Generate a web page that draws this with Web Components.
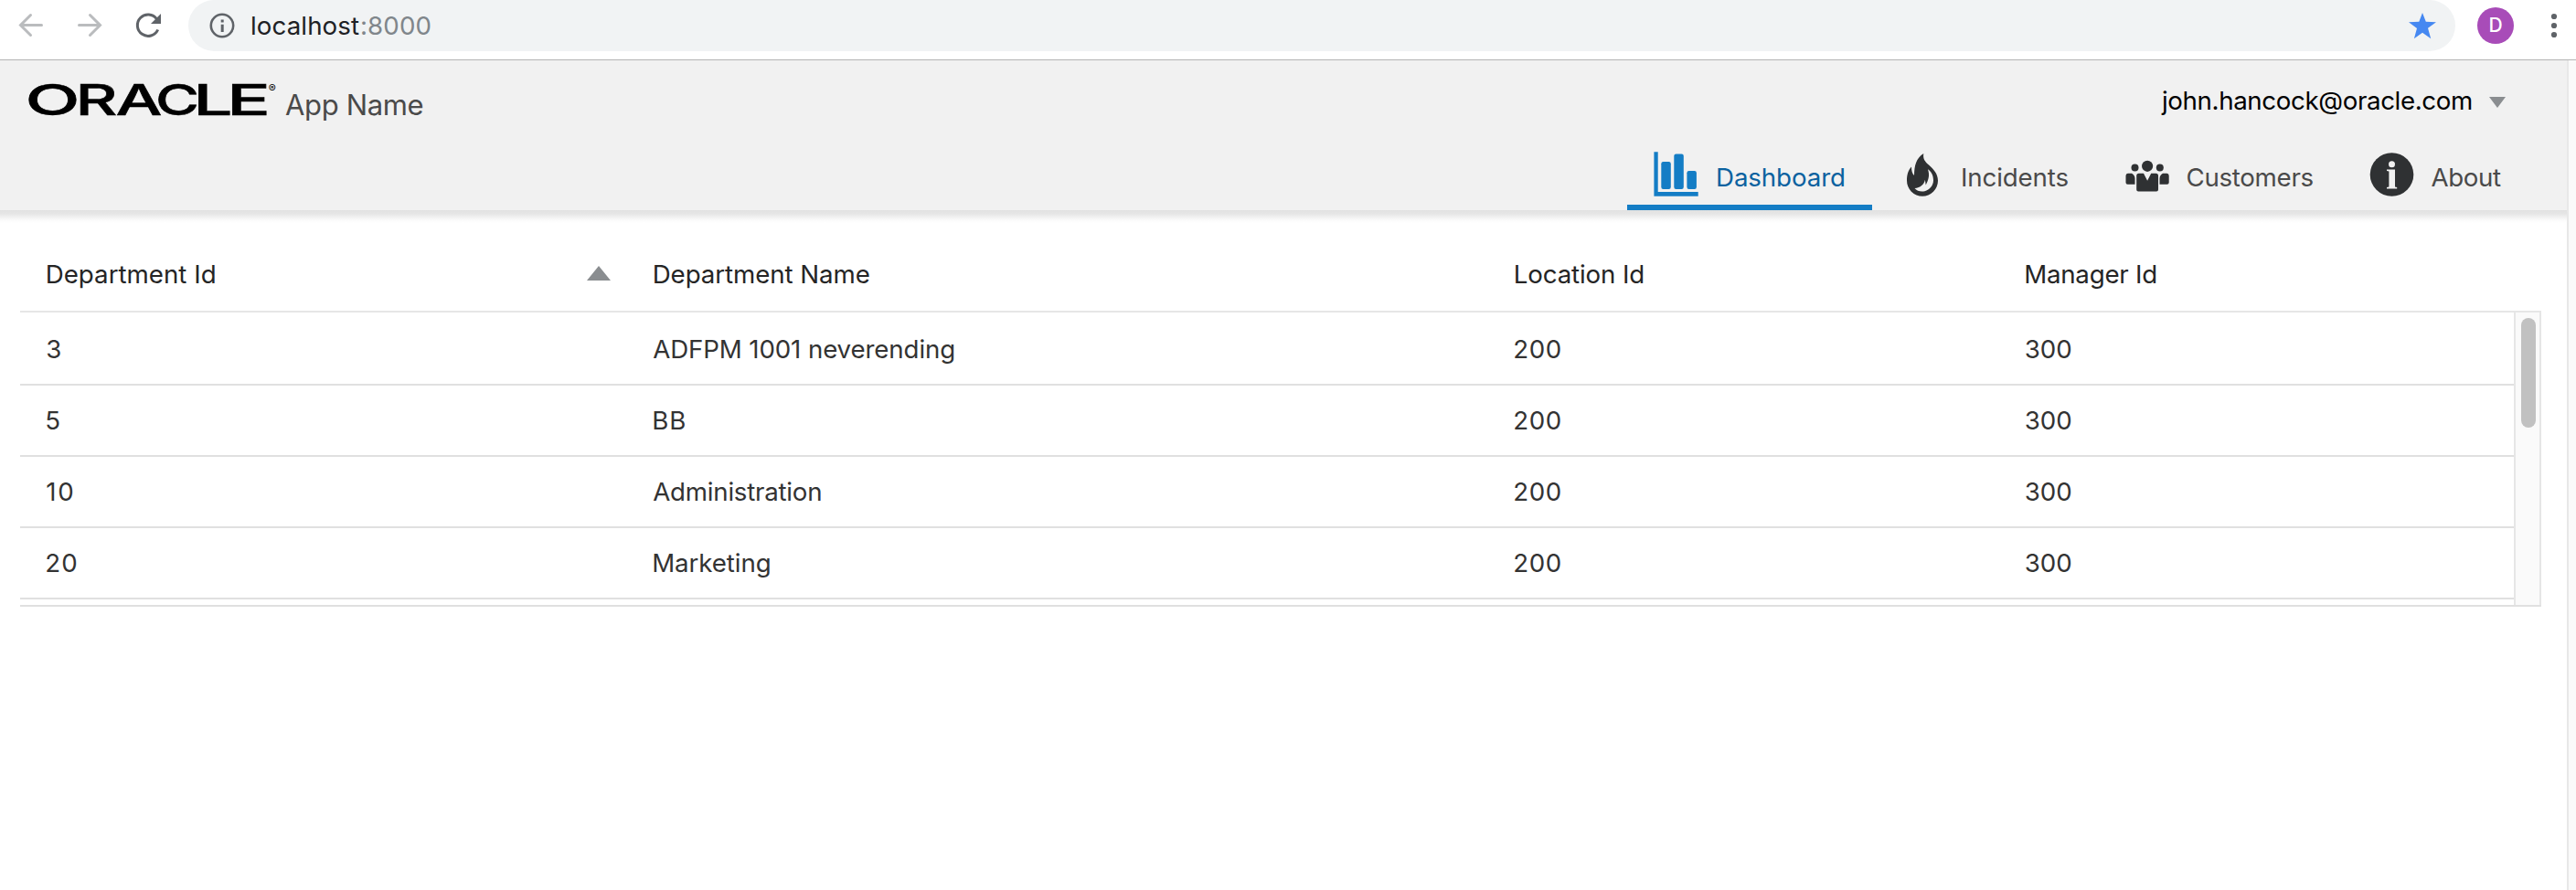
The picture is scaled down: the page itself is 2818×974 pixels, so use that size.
<!DOCTYPE html>
<html lang="en">
<head>
<meta charset="utf-8">
<title>App Name</title>
<style>
html,body{margin:0;height:100%;overflow:hidden}
body{font-family:Inter,"Liberation Sans",sans-serif;font-size:27.7px;background:#fff;color:#333}
</style>
</head>
<body>
<demo-window></demo-window>
<script>
const define = (name, html, setup) => {
  const tpl = document.createElement('template');
  tpl.innerHTML = html;
  customElements.define(name, class extends HTMLElement {
    constructor() {
      super();
      this.attachShadow({ mode: 'open' }).append(tpl.content.cloneNode(true));
    }
    connectedCallback() { if (setup) setup.call(this, this.shadowRoot); }
  });
};

/* A single line of text whose tracking is set so that it spans the given width. */
const ctx = document.createElement('canvas').getContext('2d');
define('text-run', `<style>
  :host{display:block;white-space:nowrap;flex:none}
  span{display:block}
</style><span><slot></slot></span>`, function (root) {
  const width = +this.getAttribute('width');
  const text = this.textContent;
  const cs = getComputedStyle(this);
  ctx.font = `${cs.fontWeight} ${cs.fontSize} ${cs.fontFamily}`;
  const m = ctx.measureText(text);
  const span = root.querySelector('span');
  const nudge = /^A/.test(text) ? -1 : 0;
  this.style.width = width + 'px';
  span.style.marginLeft = m.actualBoundingBoxLeft + nudge + 'px';
  if (text.length > 1) {
    const ink = m.actualBoundingBoxLeft + m.actualBoundingBoxRight;
    span.style.letterSpacing = ((width - ink) / (text.length - 1)).toFixed(3) + 'px';
  }
});

define('browser-bar', `<style>
  :host{display:flex;align-items:flex-start;height:65px;border-bottom:1px solid #b4b4b4;background:#fff;flex:none}
  svg{display:block;flex:none}
  .nav{width:206px;height:56px}
  .omni{flex:1;display:flex;align-items:center;height:56px;border-radius:28px;background:#f1f3f4;padding:0 21px 0 22.500px}
  .info{margin-right:19.500px}
  .host{color:#202124}
  .port{color:#80868b;margin-left:3px}
  .star{margin-left:auto}
  .me{width:40px;height:40px;border-radius:50%;background:#a84cb8;color:#fff;margin:8px 0 0 24px;display:flex;align-items:center;justify-content:center;font:500 21px/40px Inter,sans-serif}
  .dots{margin:14px 20px 0 40px}
</style>
<svg class="nav" viewBox="0 0 206 56" fill="none" stroke-width="3" stroke-linecap="round" stroke-linejoin="miter">
  <path d="M45.500 27.500H23M33.500 16.500l-11 11 11 11" stroke="#babcbe"/>
  <path d="M86.500 27.500H109M98.500 16.500l11 11-11 11" stroke="#babcbe"/>
  <path d="M172.700 32.500A11.700 11.700 0 1 1 171.500 20.800" stroke="#5f6368" stroke-width="3" stroke-linecap="butt"/>
  <path d="M176 15v11h-11z" fill="#5f6368"/>
</svg>
<div class="omni">
  <svg class="info" width="28" height="28" viewBox="0 0 28 28"><circle cx="14" cy="14" r="12.200" fill="none" stroke="#5f6368" stroke-width="2.600"/><path d="M12.700 7.500h3v3h-3zM12.700 12.800h3v8.300h-3z" fill="#5f6368"/></svg>
  <text-run class="host" width="117">localhost</text-run><text-run class="port" width="74.500">:8000</text-run>
  <svg class="star" width="30" height="29" viewBox="0 0 30 29"><path d="M15 0l3.800 9.800 11.200.4-9 6.600 3.200 11.400L15 21.700l-9.100 6.500L9 16.900 0 10.300l11.300-.5z" fill="#4688f1"/></svg>
</div>
<div class="me">D</div>
<svg class="dots" width="8" height="28" viewBox="0 0 8 28" fill="#5f6368"><circle cx="4" cy="4" r="3.100"/><circle cx="4" cy="14" r="3.100"/><circle cx="4" cy="24" r="3.100"/></svg>`);

define('oracle-logo', `<style>:host{display:block;flex:none}svg{display:block;overflow:visible}text{font-family:Inter,sans-serif;fill:#000}.word{stroke:#000;stroke-width:.5}</style>
<svg width="276" height="40" viewBox="30 88 276 40">
  <text class="word" y="125.800" font-size="46.300" font-weight="500"><tspan x="27.500" textLength="60" lengthAdjust="spacingAndGlyphs">O</tspan><tspan x="82.500" textLength="46" lengthAdjust="spacingAndGlyphs">R</tspan><tspan x="126.500" textLength="51" lengthAdjust="spacingAndGlyphs">A</tspan><tspan x="170" textLength="48" lengthAdjust="spacingAndGlyphs">C</tspan><tspan x="211.500" textLength="43" lengthAdjust="spacingAndGlyphs">L</tspan><tspan x="248" textLength="48" lengthAdjust="spacingAndGlyphs">E</tspan></text>
  <text x="293.800" y="100.500" font-size="12">®</text>
</svg>`);

const icons = {
  bars: '<path d="M-.6-.7h4.300v43.800h44v4.600H-.6z"/><rect x="7.300" y="10" width="10.500" height="30" rx="2.200"/><rect x="21.300" y="1.500" width="10.500" height="38.500" rx="2.200"/><rect x="35.400" y="20" width="10.500" height="20" rx="2.200"/>',
  flame: '<path fill-rule="evenodd" d="M26.300 1C25.300 7 28 10 32 13.500c5 4.500 10 9.500 10 17.300A17 17 0 0 1 25 47.700 17 17 0 0 1 8 30.500C8 24 9.500 19.500 13 15.500c0 4 .8 7.500 3 9.500C16.200 14.500 18 6 26.300 1zM31 18.200c2.200 6.800.8 11-2.300 17.300l-.8-5.800c-.9 4.800-5 8.800-11.400 9.300 2.500 3 6.800 4.200 11 3.200 5.500-1.600 9.500-6 9.500-11.900 0-5.200-2.200-9.800-6-12.100z"/>',
  people: '<circle cx="25.100" cy="14.800" r="6.100"/><circle cx="11.500" cy="16.500" r="4"/><circle cx="38.800" cy="16.500" r="4"/><path d="M15.700 22.700h5.300l4.100 8 4.100-8h5.300q2.500 0 2.500 2.500v15.300q0 2-2 2H15.200q-2 0-2-2V25.200q0-2.500 2.500-2.500zM3.700 22.700H8c2 1 3.500 3 3.500 5.500v6.500H3.500q-2 0-2-2v-7.500q0-2.500 2.200-2.500zM46.500 22.700H42c-2 1-3.500 3-3.500 5.500v6.500h8.200q2 0 2-2v-7.500q0-2.500-2.200-2.500z"/>',
  info: '<circle cx="24.500" cy="24" r="23.800"/><circle cx="24.500" cy="12.700" r="3.500" fill="#f1f1f1"/><path fill="#f1f1f1" d="M19 18.500h9v19l2.200.6v1.500H19v-1.500l2.400-.6V20.600l-2.400-.6z"/>'
};
define('nav-item', `<style>
  :host{display:flex;align-items:center;box-sizing:border-box;height:70px;padding:0 31px 2px 30px;color:#4a4a4a;--icon:#2f3133}
  :host([selected]){color:#0b62a0;--icon:#147dc5;box-shadow:inset 0 -6px #147dc5}
  svg{display:block;overflow:visible;margin:0 21px 6px 0;fill:var(--icon)}
</style><svg width="48" height="48" viewBox="0 0 48 48"></svg><slot></slot>`, function (root) {
  root.querySelector('svg').innerHTML = icons[this.getAttribute('icon')];
});

define('app-header', `<style>
  :host{display:flex;flex-direction:column;justify-content:space-between;height:164px;background:#f1f1f1;flex:none;position:relative}
  :host::after{content:"";position:absolute;left:0;right:0;top:100%;height:14px;background:linear-gradient(#e1e1e1,#e6e6e6 4px,#f2f2f2 8px,#fbfbfb 11px,#fff)}
  .top{display:flex;align-items:flex-start;padding:22px 67px 0 30px}
  .name{font-size:31px;line-height:40px;color:#4a4a4a;margin:6.500px 0 0 7px}
  .user{margin:4px 1px 0 auto;line-height:36px;color:#000}
  .arrow{margin:18px 0 0 18px;display:block}
  nav{display:flex;justify-content:flex-end;padding-right:40px}
</style>
<div class="top"><oracle-logo></oracle-logo><text-run class="name" width="150.500">App Name</text-run>
<text-run class="user" width="340">john.hancock@oracle.com</text-run>
<svg class="arrow" width="18" height="12"><path d="M0 0h18L9 12z" fill="#8a8d90"/></svg></div>
<nav>
  <nav-item icon="bars" selected><text-run width="138">Dashboard</text-run></nav-item>
  <nav-item icon="flame"><text-run width="115.500">Incidents</text-run></nav-item>
  <nav-item icon="people"><text-run width="138">Customers</text-run></nav-item>
  <nav-item icon="info"><text-run width="76.500">About</text-run></nav-item>
</nav>`);

const columns = 'grid-template-columns:664px 942px 558.500px 1fr;';
define('table-row', `<style>
  :host{display:grid;${columns}box-sizing:border-box;height:78px;align-items:center;padding-left:29.200px;border-bottom:2px solid #e0e0e0}
  :host([first]){height:80px;padding-top:2px}
  :host([head]){height:82px;color:#252525;border-color:#e6e6e6;padding-left:29.700px}
</style><slot></slot>`);

define('department-table', `<style>
  :host{display:block;width:2758px}
  .body{display:flex;height:320px;overflow:hidden;border-bottom:2px solid #e0e0e0}
  .rows{flex:1}
  .bar{box-sizing:border-box;width:30px;padding:6px 4px 0 6px;border:solid #e6e6e6;border-width:0 2px;background:#fafafa}
  .thumb{height:120px;width:16px;border-radius:8px;background:#c1c1c1}
  .sort{display:flex;align-items:center;justify-content:space-between;padding-right:47.500px}
  svg{display:block;margin-bottom:3px}
</style>
<table-row head><div class="sort"><text-run width="183">Department Id</text-run><svg width="26" height="16"><path d="M0 16h26L13 0z" fill="#8a8d90"/></svg></div><text-run width="235">Department Name</text-run><text-run width="139.500">Location Id</text-run><text-run width="142">Manager Id</text-run></table-row>
<div class="body"><div class="rows"></div><div class="bar"><div class="thumb"></div></div></div>`, function (root) {
  const cell = (text, width) => `<text-run width="${width}">${text}</text-run>`;
  root.querySelector('.rows').innerHTML = [
    ['3', 15, 'ADFPM 1001 neverending', 329],
    ['5', 15, 'BB', 34],
    ['10', 28, 'Administration', 184],
    ['20', 32, 'Marketing', 126.5]
  ].map(([id, w, name, nw], i) =>
    `<table-row${i ? '' : ' first'}>${cell(id, w)}${cell(name, nw)}${cell('200', 49.5)}${cell('300', 49.5)}</table-row>`).join('');
});

define('demo-window', `<style>
  :host{display:flex;flex-direction:column;height:974px}
  .view{flex:1;display:flex;min-height:0}
  .page{flex:1;display:flex;flex-direction:column}
  .track{box-sizing:border-box;width:10px;border-left:2px solid #e8e8e8;background:#fafafa}
  main{padding:30px 0 0 22px}
</style>
<browser-bar></browser-bar>
<div class="view"><div class="page"><app-header></app-header><main><department-table></department-table></main></div><div class="track"></div></div>`);
</script>
</body>
</html>
